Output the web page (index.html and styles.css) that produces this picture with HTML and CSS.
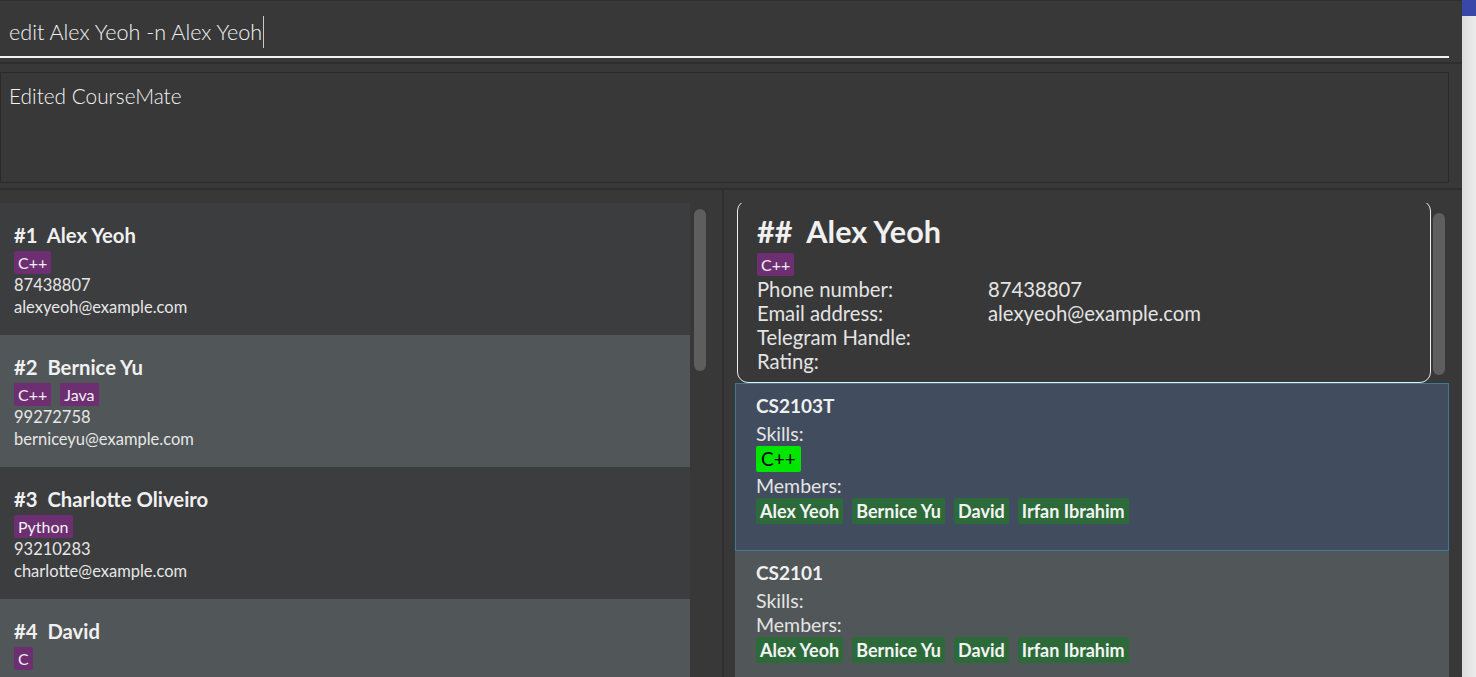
FILE: index.html
```html
<!DOCTYPE html>
<html>
<head>
<meta charset="utf-8">
<link rel="stylesheet" href="styles.css">
</head>
<body>
<div class="window">
  <div class="app">
    <div class="command">
      <div class="command-field">
        <span class="command-text">edit Alex Yeoh -n Alex Yeoh</span><span class="caret"></span>
      </div>
    </div>
    <div class="result">
      <div class="result-box">Edited CourseMate</div>
    </div>
    <div class="main">
      <div class="list-pane">
        <div class="list">
          <div class="person-card dark">
            <div class="name">#1&nbsp;&nbsp;Alex Yeoh</div>
            <div class="tags"><span class="tag">C++</span></div>
            <div class="line">87438807</div>
            <div class="line">alexyeoh@example.com</div>
          </div>
          <div class="person-card light">
            <div class="name">#2&nbsp;&nbsp;Bernice Yu</div>
            <div class="tags"><span class="tag">C++</span><span class="tag">Java</span></div>
            <div class="line">99272758</div>
            <div class="line">berniceyu@example.com</div>
          </div>
          <div class="person-card dark">
            <div class="name">#3&nbsp;&nbsp;Charlotte Oliveiro</div>
            <div class="tags"><span class="tag">Python</span></div>
            <div class="line">93210283</div>
            <div class="line">charlotte@example.com</div>
          </div>
          <div class="person-card light">
            <div class="name">#4&nbsp;&nbsp;David</div>
            <div class="tags"><span class="tag">C</span></div>
          </div>
        </div>
        <div class="scrollbar left-bar"></div>
      </div>
      <div class="divider"></div>
      <div class="detail-pane">
        <div class="detail-viewport">
          <div class="detail-inner">
            <div class="person-row">
              <div class="detail-card">
                <div class="detail-title">##&nbsp;&nbsp;Alex Yeoh</div>
                <div class="tags"><span class="tag">C++</span></div>
                <div class="field"><span class="label">Phone number:</span><span class="value">87438807</span></div>
                <div class="field"><span class="label">Email address:</span><span class="value">alexyeoh@example.com</span></div>
                <div class="field"><span class="label">Telegram Handle:</span><span class="value"></span></div>
                <div class="field"><span class="label">Rating:</span><span class="value"></span></div>
              </div>
              <div class="scrollbar right-bar"></div>
            </div>
            <div class="course-card selected">
              <div class="course-title">CS2103T</div>
              <div class="course-line">Skills:</div>
              <div class="tags"><span class="skill">C++</span></div>
              <div class="course-line after-skill">Members:</div>
              <div class="tags"><span class="member">Alex Yeoh</span><span class="member">Bernice Yu</span><span class="member">David</span><span class="member">Irfan Ibrahim</span></div>
            </div>
            <div class="course-card plain">
              <div class="course-title">CS2101</div>
              <div class="course-line">Skills:</div>
              <div class="course-line">Members:</div>
              <div class="tags"><span class="member">Alex Yeoh</span><span class="member">Bernice Yu</span><span class="member">David</span><span class="member">Irfan Ibrahim</span></div>
            </div>
          </div>
        </div>
      </div>
    </div>
  </div>
  <div class="outer-scroll"><div class="outer-thumb"></div></div>
</div>
</body>
</html>
```

FILE: styles.css
```css
html, body {
  margin: 0;
  padding: 0;
  height: 100%;
  overflow: hidden;
}
body {
  font-family: "Lato", "Open Sans", sans-serif;
  background: #383838;
  color: #e8e8e8;
}
.window {
  display: flex;
  height: 677px;
  width: 1476px;
}
.app {
  width: 1462px;
  background: #383838;
  display: flex;
  flex-direction: column;
  border-top: 1px solid #2f2f2f;
  box-sizing: border-box;
}
.outer-scroll {
  width: 14px;
  background: linear-gradient(to right, #dcdcdc, #ececec);
}
.outer-thumb {
  height: 16px;
  background: #3947a8;
}
.command {
  height: 63px;
  border-bottom: 2px solid #2e2e2e;
  padding-right: 13px;
  box-sizing: border-box;
}
.command-field {
  height: 57px;
  border-bottom: 2px solid #f2f2f2;
  display: flex;
  align-items: flex-start;
  padding: 15px 0 0 9px;
  box-sizing: border-box;
}
.command-text {
  font-size: 21.6px;
  font-weight: 300;
  color: #f4f4f4;
  line-height: 32px;
}
.caret {
  display: inline-block;
  width: 1px;
  height: 32px;
  background: #c8c8c8;
  margin-left: 1px;
}
.result {
  height: 126px;
  padding: 8px 13px 0 0;
  box-sizing: border-box;
  border-bottom: 2px solid #2e2e2e;
}
.result-box {
  height: 111px;
  border: 1px solid #2a2a2a;
  box-sizing: border-box;
  padding: 10px 8px;
  font-size: 20.8px;
  font-weight: 300;
  color: #f4f4f4;
  line-height: 26px;
}
.main {
  flex: 1;
  display: flex;
  min-height: 0;
}
.list-pane {
  width: 722px;
  padding-top: 13px;
  display: flex;
  overflow: hidden;
  box-sizing: border-box;
}
.list {
  width: 690px;
  flex: none;
}
.scrollbar {
  width: 12px;
  background: #5e5e5e;
  border-radius: 6px;
  flex: none;
}
.left-bar {
  margin: 6px 0 0 4px;
  height: 162px;
}
.divider {
  width: 2px;
  background: #2f2f2f;
}
.person-card {
  height: 132px;
  box-sizing: border-box;
  padding: 20px 14px 0;
}
.person-card.dark { background: #3c3d3f; }
.person-card.light { background: #515658; }
.name {
  font-size: 20.3px;
  font-weight: 700;
  line-height: 24px;
  color: #f0f0f0;
}
.tags {
  display: flex;
  gap: 9px;
}
.person-card .tags {
  margin-top: 4px;
}
.tag {
  background: #6d2e72;
  color: #f2f2f2;
  font-size: 16px;
  line-height: 23px;
  padding: 0 4px;
  border-radius: 2px;
}
.line {
  font-size: 16.5px;
  line-height: 22px;
  color: #e6e6e6;
}
.detail-pane {
  flex: 1;
  padding: 13px 13px 0 11px;
  box-sizing: border-box;
  display: flex;
  flex-direction: column;
  min-width: 0;
}
.detail-viewport {
  flex: 1;
  overflow: hidden;
}
.detail-inner {
  margin-top: -3px;
}
.person-row {
  display: flex;
  align-items: flex-start;
}
.detail-card {
  width: 694px;
  margin-left: 2px;
  border: 1px solid #ececec;
  border-radius: 11px;
  box-sizing: border-box;
  padding: 13px 19px 9px;
  flex: none;
}
.right-bar {
  margin: 13px 0 0 2px;
  height: 162px;
}
.detail-title {
  font-size: 30.6px;
  font-weight: 700;
  line-height: 36px;
  color: #f0f0f0;
}
.detail-card .tags {
  margin-top: 3px;
  margin-bottom: 1px;
}
.field {
  display: flex;
  font-size: 20.3px;
  line-height: 24px;
  color: #e4e4e4;
}
.label {
  width: 231px;
}
.course-card {
  border: 1px solid transparent;
  box-sizing: border-box;
  padding: 10px 20px 0;
}
.course-card.selected {
  background: #414c5e;
  border-color: #3b7c94;
  height: 168px;
}
.course-card.plain {
  background: #515658;
  height: 140px;
  padding-top: 9px;
}
.course-title {
  font-size: 19px;
  font-weight: 700;
  line-height: 24px;
  color: #f0f0f0;
  margin-bottom: 4px;
}
.course-line {
  font-size: 19.5px;
  line-height: 24px;
  color: #e4e4e4;
}
.course-line.after-skill {
  margin-top: 2px;
}
.skill {
  background: #00e600;
  color: #000;
  font-size: 19px;
  line-height: 26px;
  padding: 0 5px;
  border-radius: 2px;
}
.member {
  background: #2d6a3a;
  color: #f4f4f4;
  font-size: 18px;
  font-weight: 700;
  line-height: 26px;
  padding: 0 4px;
  border-radius: 2px;
}
```
